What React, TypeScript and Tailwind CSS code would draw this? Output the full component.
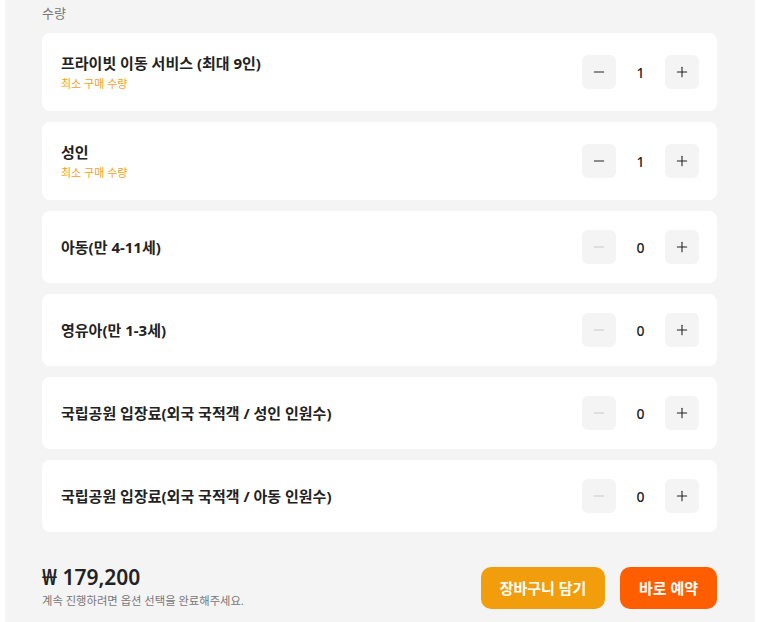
import { Minus, Plus } from 'lucide-react';

type Item = { name: string; note?: string; qty: number };

const items: Item[] = [
  { name: '프라이빗 이동 서비스 (최대 9인)', note: '최소 구매 수량', qty: 1 },
  { name: '성인', note: '최소 구매 수량', qty: 1 },
  { name: '아동(만 4-11세)', qty: 0 },
  { name: '영유아(만 1-3세)', qty: 0 },
  { name: '국립공원 입장료(외국 국적객 / 성인 인원수)', qty: 0 },
  { name: '국립공원 입장료(외국 국적객 / 아동 인원수)', qty: 0 },
];

function Stepper({ qty }: { qty: number }) {
  const disabled = qty === 0;
  return (
    <div className="flex items-center">
      <button className="w-[34px] h-[34px] rounded-md bg-[#f4f4f4] flex items-center justify-center">
        <Minus className={`w-4 h-4 ${disabled ? 'text-[#c8c8c8]' : 'text-[#222]'}`} strokeWidth={1.6} />
      </button>
      <span className="w-[49px] text-center text-[14px] text-[#222] font-medium">{qty}</span>
      <button className="w-[34px] h-[34px] rounded-md bg-[#f4f4f4] flex items-center justify-center">
        <Plus className="w-4 h-4 text-[#222]" strokeWidth={1.6} />
      </button>
    </div>
  );
}

export default function App() {
  return (
    <div className="min-h-screen bg-white pl-[5px] pr-[2px] font-['Noto_Sans','Noto_Sans_CJK_KR',sans-serif]">
      <div className="bg-[#f4f4f4] min-h-[622px] pl-[37px] pr-[38px] pt-[4px] pb-6">
        <div className="text-[13px] leading-[18px] text-[#777] mb-[11px]">수량</div>

        <div className="flex flex-col gap-[11px]">
          {items.map((item) => (
            <div
              key={item.name}
              className={`bg-white rounded-lg pl-[19px] pr-[18px] flex items-center justify-between ${
                item.note ? 'py-[20px]' : 'py-[19px]'
              }`}
            >
              <div className="flex flex-col">
                <span className="text-[15px] leading-[20px] font-bold text-[#222]">{item.name}</span>
                {item.note && (
                  <span className="text-[11px] leading-[14px] mt-[4px] text-[#f5a11a]">{item.note}</span>
                )}
              </div>
              <Stepper qty={item.qty} />
            </div>
          ))}
        </div>

        <div className="flex items-start justify-between mt-[33px]">
          <div className="flex flex-col">
            <span className="text-[21px] leading-[24px] font-semibold text-[#222]">₩ 179,200</span>
            <span className="text-[11.3px] leading-[14px] mt-[5px] text-[#777]">
              계속 진행하려면 옵션 선택을 완료해주세요.
            </span>
          </div>
          <div className="flex items-center gap-[15px] mt-[2px]">
            <button className="h-[42px] w-[124px] rounded-[10px] bg-[#f29e0c] text-white text-[15px] font-bold">
              장바구니 담기
            </button>
            <button className="h-[42px] w-[97px] rounded-[10px] bg-[#ff5e00] text-white text-[15px] font-bold">
              바로 예약
            </button>
          </div>
        </div>
      </div>
    </div>
  );
}
